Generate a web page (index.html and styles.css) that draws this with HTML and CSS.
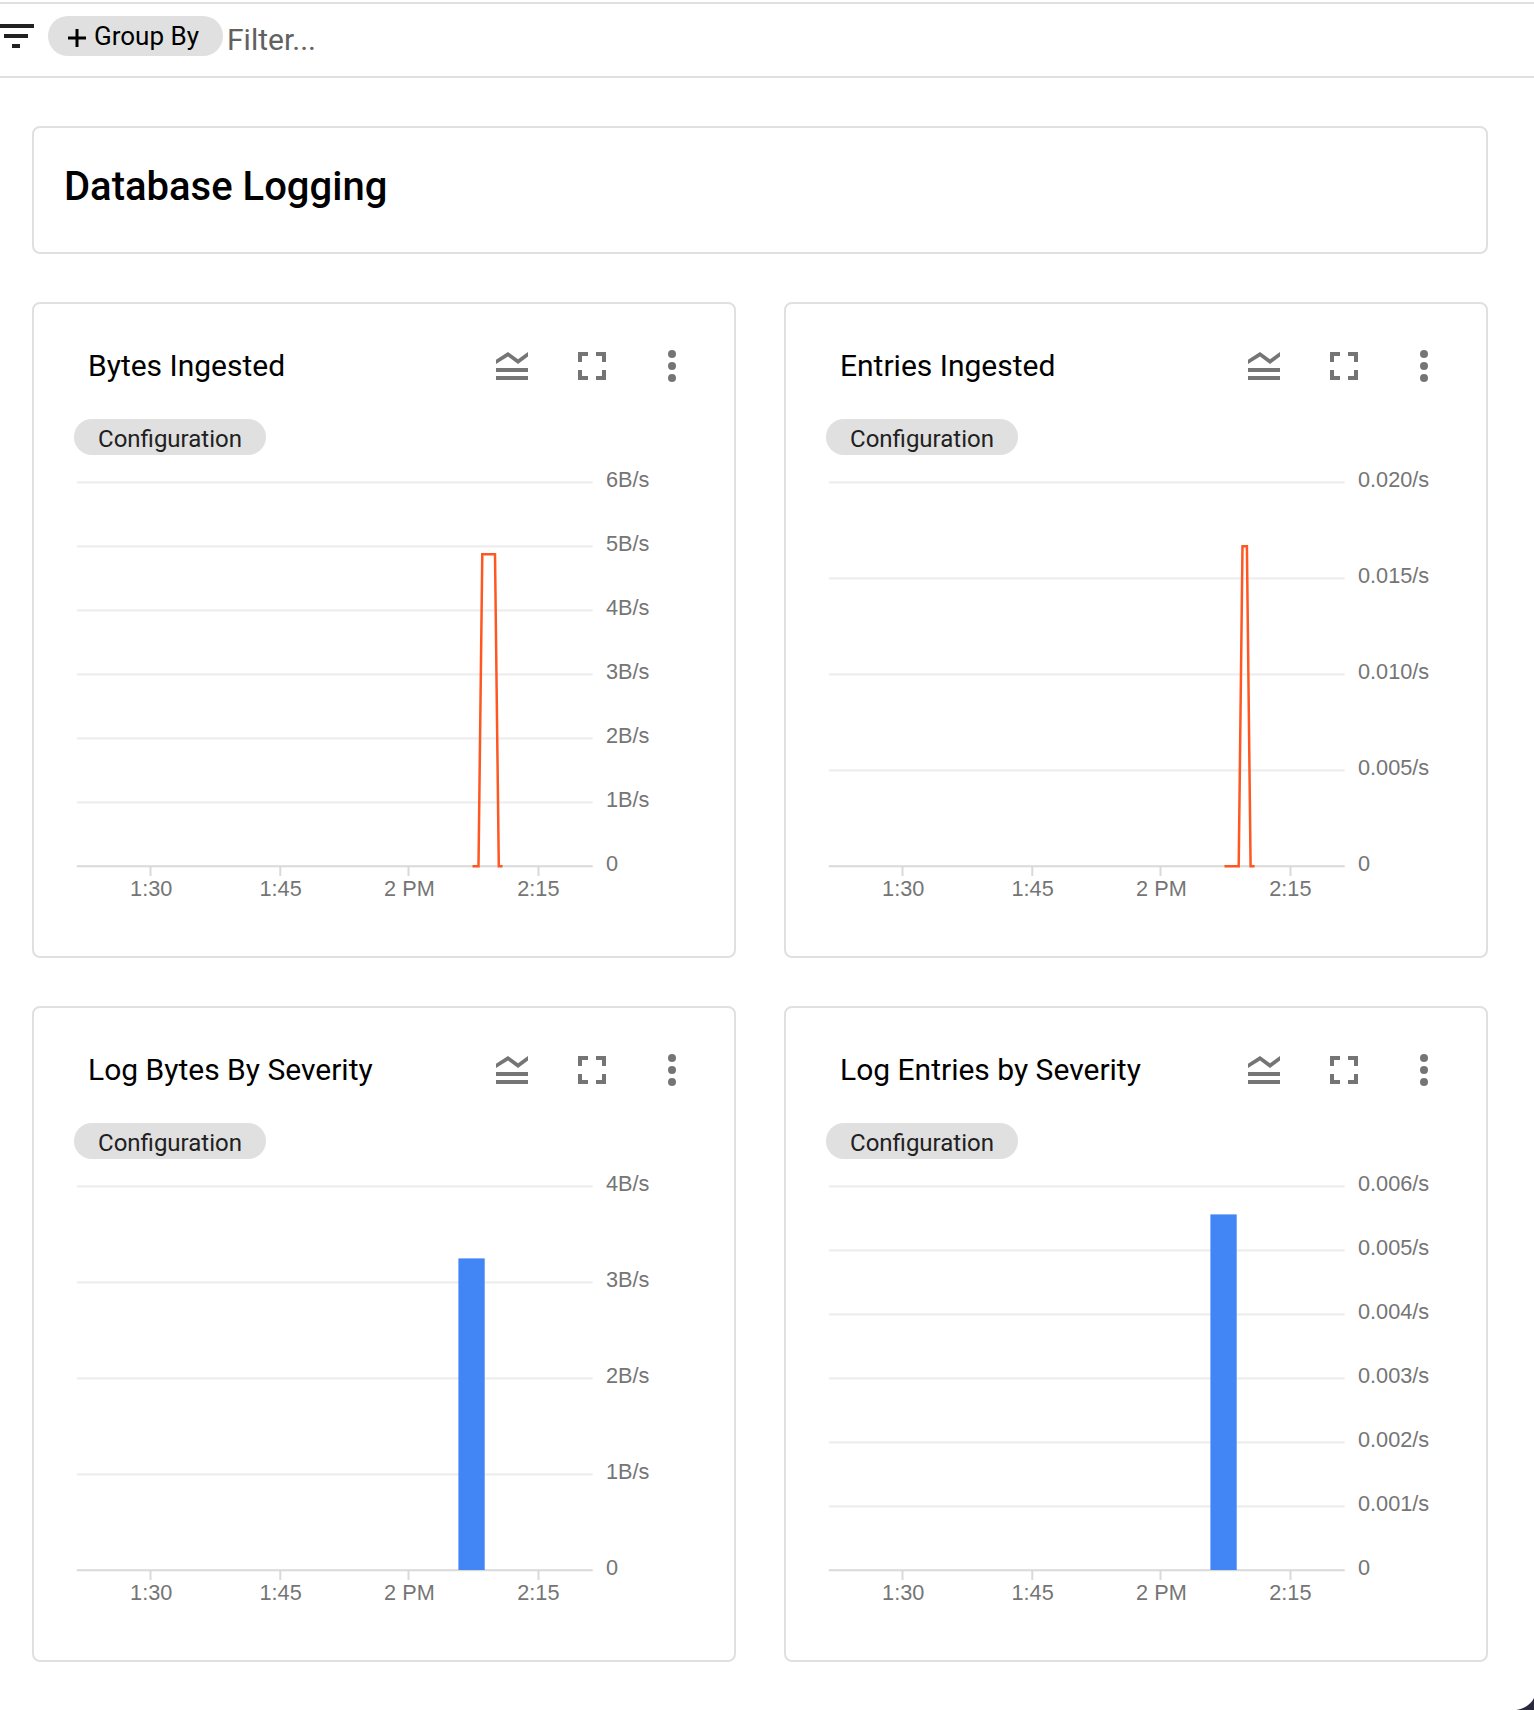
FILE: index.html
```html
<!DOCTYPE html>
<html lang="en">
<head>
<meta charset="utf-8">
<title>Database Logging</title>
<link rel="stylesheet" href="styles.css">
</head>
<body>
<svg width="0" height="0" class="defs" aria-hidden="true">
  <symbol id="i-legend" viewBox="0 0 32 32"><path d="M0 11.7 12 4 22 11.3 32 4v4.4L22 16 12 8.4 0 16zM0 20h32v4H0zM0 28h32v4H0z"/></symbol>
  <symbol id="i-full" viewBox="0 0 28 28"><path d="M0 0h10v4H4v6H0zM18 0h10v10h-4V4h-6zM0 18h4v6h6v4H0zM24 18h4v10H18v-4h6z"/></symbol>
  <symbol id="i-more" viewBox="0 0 8 32"><circle cx="4" cy="4" r="4"/><circle cx="4" cy="16" r="4"/><circle cx="4" cy="28" r="4"/></symbol>
</svg>

<header class="toolbar">
  <svg class="filter-icon" width="34" height="24" viewBox="0 0 34 24"><path d="M0 0h34v4H0zM4 10h24v4H4zM12 20h8v4h-8z"/></svg>
  <button class="group-by"><svg width="18" height="18" viewBox="0 0 18 18"><path d="M7.500 0h3v7.500H18v3h-7.500V18h-3v-7.500H0v-3h7.500z"/></svg><span>Group By</span></button>
  <span class="filter-text">Filter...</span>
</header>

<main class="board">
  <section class="card heading"><h1>Database Logging</h1></section>

  <section class="card">
    <div class="card-head"><h2>Bytes Ingested</h2><div class="tools"><svg class="legend"><use href="#i-legend"/></svg><svg class="full"><use href="#i-full"/></svg><svg class="more"><use href="#i-more"/></svg></div></div>
    <span class="chip">Configuration</span>
    <svg class="chart" viewBox="0 0 640 450">
      <path class="grid" d="M42.7 18.3h516m-516 64h516m-516 64h516m-516 64h516m-516 64h516m-516 64h516"/>
      <path class="axis" d="M42.7 402.3h516M116.5 403v9M246.3 403v9M374.5 403v9M504.5 403v9"/>
      <g class="label mid"><text x="117.2" y="432">1:30</text><text x="246.6" y="432">1:45</text><text x="375.4" y="432">2 PM</text><text x="504.4" y="432">2:15</text></g>
      <g class="label"><text x="572" y="23">6B/s</text><text x="572" y="87">5B/s</text><text x="572" y="151">4B/s</text><text x="572" y="215">3B/s</text><text x="572" y="279">2B/s</text><text x="572" y="343">1B/s</text><text x="572" y="407">0</text></g>
      <path class="line" d="M438.5 402.3h6l3.8-312H461l3.8 312h3.7"/>
    </svg>
  </section>

  <section class="card">
    <div class="card-head"><h2>Entries Ingested</h2><div class="tools"><svg class="legend"><use href="#i-legend"/></svg><svg class="full"><use href="#i-full"/></svg><svg class="more"><use href="#i-more"/></svg></div></div>
    <span class="chip">Configuration</span>
    <svg class="chart" viewBox="0 0 640 450">
      <path class="grid" d="M42.7 18.3h516m-516 96h516m-516 96h516m-516 96h516"/>
      <path class="axis" d="M42.7 402.3h516M116.5 403v9M246.3 403v9M374.5 403v9M504.5 403v9"/>
      <g class="label mid"><text x="117.2" y="432">1:30</text><text x="246.6" y="432">1:45</text><text x="375.4" y="432">2 PM</text><text x="504.4" y="432">2:15</text></g>
      <g class="label"><text x="572" y="23">0.020/s</text><text x="572" y="119">0.015/s</text><text x="572" y="215">0.010/s</text><text x="572" y="311">0.005/s</text><text x="572" y="407">0</text></g>
      <path class="line" d="M438.5 402.3h14.2l3.8-320h4.4l3.7 320h4"/>
    </svg>
  </section>

  <section class="card">
    <div class="card-head"><h2>Log Bytes By Severity</h2><div class="tools"><svg class="legend"><use href="#i-legend"/></svg><svg class="full"><use href="#i-full"/></svg><svg class="more"><use href="#i-more"/></svg></div></div>
    <span class="chip">Configuration</span>
    <svg class="chart" viewBox="0 0 640 450">
      <path class="grid" d="M42.7 18.3h516m-516 96h516m-516 96h516m-516 96h516"/>
      <path class="axis" d="M42.7 402.3h516M116.5 403v9M246.3 403v9M374.5 403v9M504.5 403v9"/>
      <g class="label mid"><text x="117.2" y="432">1:30</text><text x="246.6" y="432">1:45</text><text x="375.4" y="432">2 PM</text><text x="504.4" y="432">2:15</text></g>
      <g class="label"><text x="572" y="23">4B/s</text><text x="572" y="119">3B/s</text><text x="572" y="215">2B/s</text><text x="572" y="311">1B/s</text><text x="572" y="407">0</text></g>
      <rect class="bar" x="424.4" y="90.4" width="26.3" height="311.6"/>
    </svg>
  </section>

  <section class="card">
    <div class="card-head"><h2>Log Entries by Severity</h2><div class="tools"><svg class="legend"><use href="#i-legend"/></svg><svg class="full"><use href="#i-full"/></svg><svg class="more"><use href="#i-more"/></svg></div></div>
    <span class="chip">Configuration</span>
    <svg class="chart" viewBox="0 0 640 450">
      <path class="grid" d="M42.7 18.3h516m-516 64h516m-516 64h516m-516 64h516m-516 64h516m-516 64h516"/>
      <path class="axis" d="M42.7 402.3h516M116.5 403v9M246.3 403v9M374.5 403v9M504.5 403v9"/>
      <g class="label mid"><text x="117.2" y="432">1:30</text><text x="246.6" y="432">1:45</text><text x="375.4" y="432">2 PM</text><text x="504.4" y="432">2:15</text></g>
      <g class="label"><text x="572" y="23">0.006/s</text><text x="572" y="87">0.005/s</text><text x="572" y="151">0.004/s</text><text x="572" y="215">0.003/s</text><text x="572" y="279">0.002/s</text><text x="572" y="343">0.001/s</text><text x="572" y="407">0</text></g>
      <rect class="bar" x="424.4" y="46.4" width="26.3" height="355.6"/>
    </svg>
  </section>
</main>
<svg class="corner" width="18" height="12" viewBox="0 0 18 12"><path d="M0 12C8 11 15 6.500 18 0v12z"/></svg>
</body>
</html>
```
FILE: styles.css
```css
* { box-sizing: border-box; }
body {
  margin: 0;
  position: relative;
  height: 1710px;
  padding-top: 2px;
  overflow: hidden;
  background: #fff;
  color: #000;
  font-family: Roboto, sans-serif;
}
svg { display: block; flex: none; }
.defs { position: absolute; }
.toolbar {
  display: flex;
  align-items: flex-start;
  height: 76px;
  border-top: 2px solid #e0e0e0;
  border-bottom: 2px solid #e0e0e0;
}
.filter-icon { margin-top: 20px; fill: #212121; }
.group-by {
  display: flex;
  align-items: flex-start;
  gap: 7px;
  width: 175px;
  height: 40px;
  margin: 12px 0 0 14px;
  padding: 0 0 0 20px;
  border: 0;
  border-radius: 20px;
  background: #e0e0e0;
  color: #000;
  font: 26px/40px Roboto, sans-serif;
  white-space: nowrap;
}
.group-by svg { margin-top: 13px; }
.group-by span { padding-left: 1px; }
.filter-text {
  margin: 18px 0 0 4px;
  color: #616161;
  font-size: 30px;
  line-height: 36px;
}
.board {
  display: grid;
  grid-template-columns: 704px 704px;
  grid-template-rows: 128px 656px 656px;
  gap: 48px;
  padding: 48px 0 0 32px;
}
.card {
  border: 2px solid #e0e0e0;
  border-radius: 8px;
  display: flex;
  flex-direction: column;
  align-items: flex-start;
}
.heading { grid-column: 1 / 3; padding: 35px 0 0 30px; }
h1, h2 { margin: 0; white-space: nowrap; }
h1 { font-size: 40px; font-weight: 500; line-height: 48px; }
h2 { font-size: 30px; font-weight: 400; line-height: 36px; }
.card-head {
  display: flex;
  justify-content: space-between;
  width: 100%;
  height: 115px;
  padding: 44px 58px 0 54px;
}
.tools { display: flex; fill: #757575; }
.legend { width: 32px; height: 32px; }
.full { width: 28px; height: 28px; margin: 4px 0 0 50px; }
.more { width: 8px; height: 32px; margin: 2px 0 0 62px; }
.chip {
  width: 192px;
  height: 36px;
  margin-left: 40px;
  border-radius: 18px;
  background: #e0e0e0;
  color: #212121;
  font-size: 24px;
  line-height: 40px;
  text-align: center;
}
.chart { width: 640px; height: 450px; margin-top: 9px; overflow: visible; }
.grid { fill: none; stroke: #eee; stroke-width: 2.2; }
.axis { fill: none; stroke: #d9d9d9; stroke-width: 2; }
.line { fill: none; stroke: #ff5722; stroke-width: 2.5; }
.bar { fill: #4285f4; }
.label { fill: #757575; font: 21.7px "Liberation Sans", Arial, sans-serif; }
.mid { text-anchor: middle; }
.corner { position: absolute; right: 0; bottom: 0; fill: #2b2a3d; }
```
